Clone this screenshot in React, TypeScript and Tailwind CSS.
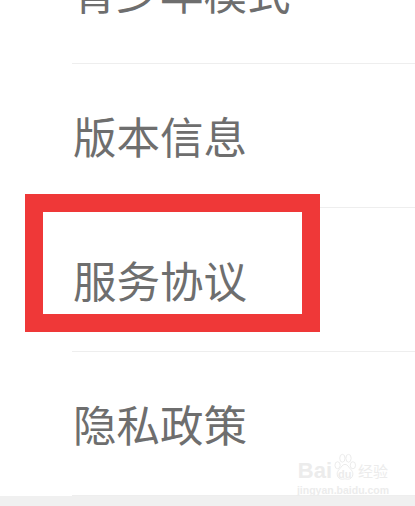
import React from 'react';

const ROWS = ['青少年模式', '版本信息', '服务协议', '隐私政策'];

export default function App() {
  return (
    <div className="relative w-[415px] h-[506px] overflow-hidden bg-white font-['Noto_Sans_CJK_SC',sans-serif]">
      {/* List, first row is scrolled off the top */}
      <div className="-mt-[80px] flex flex-col">
        {ROWS.map((label) => (
          <div key={label} className="ml-[72px] h-[144px] pl-[1px] flex items-center border-b border-[#eeeeee]">
            <span className="text-[43.500px] leading-none text-[#6e6e6e]">{label}</span>
          </div>
        ))}
      </div>
      <div className="h-[10px] bg-[#f0f0f0]" />

      {/* Red annotation */}
      <div className="absolute left-[25px] top-[194px] w-[295px] h-[138px] border-[18px] border-[#ef3838]" />

      {/* Watermark */}
      <div className="absolute left-[297px] top-[452px] w-[92px] flex flex-col items-center text-[#ececec]">
        <div className="flex items-end h-[29px] font-['Liberation_Sans',sans-serif]">
          <span className="text-[22px] leading-[20px] font-bold">Bai</span>
          <div className="relative w-[26px] h-[28px]">
            <svg viewBox="0 0 24 32" className="absolute top-0 left-0 w-[26px] h-[28px]" fill="#ffffff" stroke="#e8e8e8" strokeWidth="1">
              <ellipse cx="3.5" cy="14" rx="3" ry="4" />
              <ellipse cx="9" cy="6" rx="3" ry="4.500" />
              <ellipse cx="16" cy="6" rx="3" ry="4.500" />
              <ellipse cx="21" cy="14" rx="3" ry="4" />
              <path d="M12 13c-3 0-4 3-6 5s-3 4-3 6c0 4 3 6 6 6 1.500 0 2-.5 3-.5s1.500.5 3 .5c3 0 6-2 6-6 0-2-1-4-3-6s-3-5-6-5z" />
            </svg>
            <span className="absolute left-[6px] top-[15px] text-[11px] leading-[12px] font-bold">du</span>
          </div>
          <span className="text-[15px] leading-[20px] font-['Noto_Sans_CJK_SC',sans-serif] whitespace-nowrap">经验</span>
        </div>
        <span className="mt-[3px] text-[10.500px] leading-[12px] font-['Liberation_Sans',sans-serif] font-bold whitespace-nowrap">jingyan.baidu.com</span>
      </div>
    </div>
  );
}
